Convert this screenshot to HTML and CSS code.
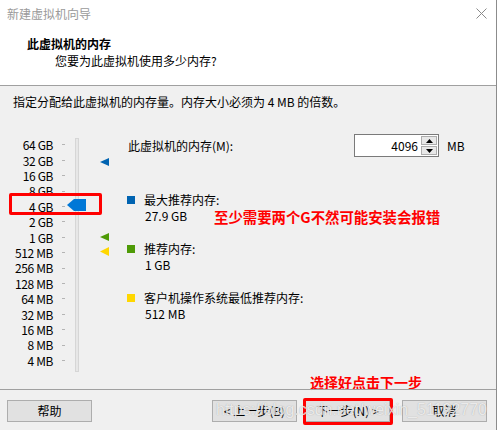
FILE: index.html
```html
<!DOCTYPE html>
<html lang="zh-CN">
<head>
<meta charset="utf-8">
<title>新建虚拟机向导</title>
<link rel="stylesheet" href="styles.css">
</head>
<body>
<div class="window">
  <div class="titlebar">
    <span class="title">新建虚拟机向导</span>
    <svg class="close" width="11" height="11" viewBox="0 0 11 11"><path d="M0.5 0.5 L10.5 10.5 M10.5 0.5 L0.5 10.5" stroke="#8a8a8a" stroke-width="1" fill="none"/></svg>
  </div>
  <div class="header">
    <div class="h-title">此虚拟机的内存</div>
    <div class="h-sub">您要为此虚拟机使用多少内存?</div>
  </div>
  <div class="content">
    <p class="desc">指定分配给此虚拟机的内存量。内存大小必须为 4 MB 的倍数。</p>
    <div class="main">
      <div class="slider">
        <div class="scale">
          <div class="row"><span class="lbl">64 GB</span><i class="tick"></i></div>
          <div class="row"><span class="lbl">32 GB</span><i class="tick"></i></div>
          <div class="row"><span class="lbl">16 GB</span><i class="tick"></i></div>
          <div class="row"><span class="lbl">8 GB</span><i class="tick"></i></div>
          <div class="row"><span class="lbl">4 GB</span><i class="tick"></i></div>
          <div class="row"><span class="lbl">2 GB</span><i class="tick"></i></div>
          <div class="row"><span class="lbl">1 GB</span><i class="tick"></i></div>
          <div class="row"><span class="lbl">512 MB</span><i class="tick"></i></div>
          <div class="row"><span class="lbl">256 MB</span><i class="tick"></i></div>
          <div class="row"><span class="lbl">128 MB</span><i class="tick"></i></div>
          <div class="row"><span class="lbl">64 MB</span><i class="tick"></i></div>
          <div class="row"><span class="lbl">32 MB</span><i class="tick"></i></div>
          <div class="row"><span class="lbl">16 MB</span><i class="tick"></i></div>
          <div class="row"><span class="lbl">8 MB</span><i class="tick"></i></div>
          <div class="row"><span class="lbl">4 MB</span><i class="tick"></i></div>
        </div>
        <div class="track"></div>
        <svg class="mark mark-max" width="9" height="8" viewBox="0 0 9 8"><polygon points="0,4 9,0 9,8" fill="#0063b1"/></svg>
        <svg class="thumb" width="19" height="12" viewBox="0 0 19 12"><polygon points="0,6 7,0 19,0 19,12 7,12" fill="#0078d7"/></svg>
        <svg class="mark mark-rec" width="9" height="8" viewBox="0 0 9 8"><polygon points="0,4 9,0 9,8" fill="#4e9a06"/></svg>
        <svg class="mark mark-min" width="9" height="9" viewBox="0 0 9 9"><polygon points="0,4.5 9,0 9,9" fill="#ffd700"/></svg>
        <div class="annot-box"></div>
      </div>
      <div class="right">
        <div class="mem-row">
          <span class="mem-label">此虚拟机的内存(M):</span>
          <div class="numeric">
            <span class="num-val">4096</span>
            <div class="spinner">
              <span class="spin-btn"><svg width="7" height="4" viewBox="0 0 7 4"><polygon points="3.5,0 7,4 0,4" fill="#000"/></svg></span>
              <span class="spin-btn"><svg width="7" height="4" viewBox="0 0 7 4"><polygon points="0,0 7,0 3.5,4" fill="#000"/></svg></span>
            </div>
          </div>
          <span class="unit">MB</span>
        </div>
        <div class="legend">
          <div class="legend-item">
            <span class="sq sq-blue"></span>
            <div class="legend-text">
              <div>最大推荐内存:</div>
              <div class="val-row"><span class="val">27.9 GB</span><span class="warn">至少需要两个G不然可能安装会报错</span></div>
            </div>
          </div>
          <div class="legend-item">
            <span class="sq sq-green"></span>
            <div class="legend-text">
              <div>推荐内存:</div>
              <div class="val-row"><span class="val">1 GB</span></div>
            </div>
          </div>
          <div class="legend-item">
            <span class="sq sq-yellow"></span>
            <div class="legend-text">
              <div>客户机操作系统最低推荐内存:</div>
              <div class="val-row"><span class="val">512 MB</span></div>
            </div>
          </div>
        </div>
      </div>
    </div>
    <div class="note">选择好点击下一步</div>
  </div>
  <div class="footer">
    <button class="btn btn-help">帮助</button>
    <button class="btn btn-back">&lt; 上一步(B)</button>
    <button class="btn btn-next">下一步(N) &gt;</button>
    <button class="btn btn-cancel">取消</button>
  </div>
  <div class="watermark">https://blog.csdn.net/weixin_51192770</div>
</div>
</body>
</html>
```

FILE: styles.css
```css
html, body {
  margin: 0;
  padding: 0;
  background: #ffffff;
}
body {
  width: 498px;
  height: 430px;
  overflow: hidden;
  font-family: "Noto Sans CJK SC", "Microsoft YaHei", sans-serif;
  font-size: 12px;
  color: #000;
}
.window {
  position: relative;
  width: 496px;
  height: 430px;
  border-right: 1px solid #8c8c8c;
  background: #f0f0f0;
  display: flex;
  flex-direction: column;
}
.titlebar {
  height: 28px;
  flex: none;
  background: #fff;
  display: flex;
  align-items: center;
  justify-content: space-between;
  padding: 0 9px 0 7px;
}
.title {
  color: #9a9a9a;
  line-height: 16px;
}
.close {
  display: block;
  margin-top: -1px;
}
.header {
  flex: none;
  background: #fff;
  border-bottom: 1px solid #a0a0a0;
  padding-top: 8px;
  box-sizing: border-box;
  height: 58px;
}
.h-title {
  font-weight: bold;
  line-height: 16px;
  padding-left: 27px;
}
.h-sub {
  line-height: 16px;
  padding-left: 55px;
  margin-top: 1px;
}
.content {
  height: 303px;
  flex: none;
  display: flex;
  flex-direction: column;
}
.desc {
  margin: 8px 0 0 13px;
  line-height: 16px;
}
.main {
  margin-top: 24px;
  display: flex;
}
.slider {
  position: relative;
  width: 127px;
  height: 240px;
  flex: none;
  display: flex;
  align-items: flex-start;
}
.scale {
  padding-top: 3.3px;
  width: 65px;
}
.row {
  height: 15.4px;
  display: flex;
  align-items: center;
}
.lbl {
  width: 53px;
  text-align: right;
  line-height: 15.4px;
  white-space: nowrap;
  letter-spacing: -0.4px;
}
.tick {
  display: block;
  width: 3px;
  height: 1px;
  margin-left: 9px;
  background: #b4b4b4;
}
.track {
  margin-left: 10px;
  margin-top: 4px;
  width: 4px;
  height: 234px;
  box-sizing: border-box;
  border: 1px solid #d6d6d6;
  background: #e7e7e7;
}
.mark, .thumb {
  position: absolute;
  display: block;
}
.mark-max { left: 100px; top: 24px; }
.thumb { left: 67px; top: 65px; }
.mark-rec { left: 100px; top: 99px; }
.mark-min { left: 100px; top: 113px; }
.annot-box {
  position: absolute;
  left: 9px;
  top: 59px;
  width: 93px;
  height: 22px;
  box-sizing: border-box;
  border: 3px solid #ff0000;
  border-radius: 2px;
}
.right {
  flex: 1;
}
.mem-row {
  display: flex;
  align-items: center;
  height: 23px;
}
.mem-label {
  width: 227px;
  padding-left: 1px;
  box-sizing: border-box;
  line-height: 16px;
}
.numeric {
  width: 85px;
  height: 23px;
  box-sizing: border-box;
  border: 1px solid #7a7a7a;
  background: #fff;
  display: flex;
}
.num-val {
  flex: 1;
  text-align: right;
  padding-right: 3px;
  line-height: 21px;
}
.spinner {
  width: 16px;
  padding: 1px 1px 1px 0;
  display: flex;
  flex-direction: column;
  gap: 1px;
}
.spin-btn {
  flex: 1;
  border: 1px solid #adadad;
  background: #e8e8e8;
  display: flex;
  align-items: center;
  justify-content: center;
}
.spin-btn svg { display: block; }
.unit {
  margin-left: 8px;
  line-height: 16px;
}
.legend {
  margin-top: 35px;
  display: flex;
  flex-direction: column;
  gap: 17px;
}
.legend-item {
  display: flex;
  align-items: flex-start;
}
.sq {
  width: 8px;
  height: 8px;
  margin-top: 4px;
  margin-right: 9px;
  flex: none;
}
.sq-blue { background: #0063b1; }
.sq-green { background: #4e9a06; }
.sq-yellow { background: #ffd700; }
.legend-text {
  line-height: 16px;
}
.val-row {
  display: flex;
  align-items: center;
  height: 16px;
  padding-left: 1px;
}
.val {
  width: 69px;
  flex: none;
}
.warn {
  color: #ff0000;
  font-weight: bold;
  font-size: 14.4px;
  line-height: 16px;
  margin-top: 2px;
  white-space: nowrap;
}
.note {
  margin-top: auto;
  margin-bottom: 1px;
  margin-left: 310px;
  color: #ff0000;
  font-weight: bold;
  font-size: 14px;
  line-height: 16px;
}
.footer {
  flex: 1;
  border-top: 1px solid #a0a0a0;
  display: flex;
  align-items: flex-start;
  padding: 10px 0 0 7px;
}
.btn {
  font-family: inherit;
  font-size: 12px;
  color: #000;
  height: 22px;
  width: 85px;
  padding: 0;
  border: 1px solid #adadad;
  background: #e1e1e1;
  line-height: 20px;
  box-sizing: border-box;
  position: relative;
}
.btn-back { margin-left: 120px; }
.btn-next { margin-left: 8px; }
.btn-next::after {
  content: "";
  position: absolute;
  left: -3px;
  top: -3px;
  right: -4px;
  bottom: -4px;
  border: 3px solid #ff0000;
  border-radius: 2px;
}
.btn-cancel { margin-left: 12px; }
.watermark {
  position: absolute;
  left: 216px;
  top: 400px;
  font-family: "Liberation Sans", Arial, sans-serif;
  font-size: 16px;
  line-height: 20px;
  color: rgba(255, 255, 255, 0.75);
  text-shadow: 0 0 1px rgba(110, 110, 110, 0.55);
  white-space: nowrap;
  pointer-events: none;
}
```
